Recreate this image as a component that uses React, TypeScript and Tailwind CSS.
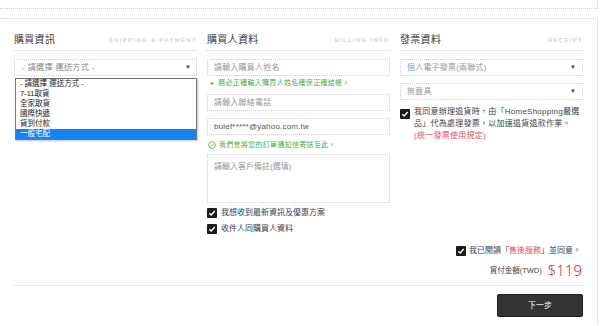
import React from 'react';

const font = { fontFamily: '"Liberation Sans", "Noto Sans CJK TC", sans-serif' };

const Check = () => (
	<span className="flex h-[10px] w-[10px] shrink-0 items-center justify-center rounded-[1px] bg-[#1a1a1a]">
		<svg viewBox="0 0 10 10" className="h-[8px] w-[8px]">
			<path d="M1.6 5.2 L4 7.4 L8.4 2.6" fill="none" stroke="#fff" strokeWidth="1.8" />
		</svg>
	</span>
);

const Arrow = () => <span className="text-[6px] text-[#444]">▼</span>;

const Header = ({ zh, en }: { zh: string; en: string }) => (
	<div className="flex h-[32px] items-end justify-between border-b border-dotted border-[#cfcfcf] pb-[4px]">
		<span className="text-[10px] leading-[12px] tracking-[0.3px] text-[#3a3a3a]">{zh}</span>
		<span className="text-[6px] font-bold leading-[12px] tracking-[1.3px] text-[#d4d4d4]">{en}</span>
	</div>
);

const Field = ({ text, dark, arrow }: { text: string; dark?: boolean; arrow?: boolean }) => (
	<div className="flex h-[17px] items-center justify-between border border-dotted border-[#cfcfcf] px-[6px]">
		<span className={`text-[8px] tracking-[0.2px] ${dark ? 'text-[#555]' : 'text-[#999]'}`}>{text}</span>
		{arrow && <Arrow />}
	</div>
);

const shipping = ['- 請選擇 運送方式 -', '7-11取貨', '全家取貨', '國際快遞', '貨到付款', '一般宅配'];

export default function App() {
	return (
		<div className="h-[326px] w-[600px] overflow-hidden bg-white" style={font}>
			<div className="h-[9px] w-[598px] border-r border-b border-dotted border-[#d0d0d0]" />
			<div className="mt-[9px] w-[598px] border-t border-r border-dotted border-[#d0d0d0] px-[14px] pb-[20px]">
				<div className="flex gap-[10px]">
					{/* 購買資訊 */}
					<div className="w-[183px]">
						<Header zh="購買資訊" en="SHIPPING & PAYMENT" />
						<div className="relative mt-[8px]">
							<div className="flex h-[17px] items-center justify-between border border-dotted border-[#cfcfcf] pr-[5px] pl-[7px]">
								<span className="text-[8px] tracking-[0.4px] text-[#888]">- 請選擇 運送方式 -</span>
								<Arrow />
							</div>
							<div className="absolute top-[19px] left-[1px] z-10 w-[182px] border border-[#777] bg-white shadow-[1px_1px_2px_rgba(0,0,0,0.25)]">
								{shipping.map((s, i) => (
									<div
										key={s}
										className={`h-[10px] px-[4px] text-[7.5px] leading-[10px] ${
											i === shipping.length - 1 ? 'bg-[#1684f0] text-white' : 'text-[#222]'
										}`}
									>
										{s}
									</div>
								))}
							</div>
						</div>
					</div>

					{/* 購買人資料 */}
					<div className="w-[183px]">
						<Header zh="購買人資料" en="BILLING INFO" />
						<div className="mt-[8px]">
							<Field text="請輸入購買人姓名" />
						</div>
						<div className="mt-[2px] flex items-center gap-[3px] pl-[3px] text-[7px] leading-[10px] tracking-[0.3px] text-[#3fae49]">
							<span className="text-[5px]">►</span>
							務必正確輸入購買人姓名確保正確結帳。
						</div>
						<div className="mt-[6px]">
							<Field text="請輸入聯絡電話" />
						</div>
						<div className="mt-[7px]">
							<Field text="bulef*****@yahoo.com.tw" dark />
						</div>
						<div className="mt-[5px] flex items-center gap-[3px] pl-[1px] text-[7px] leading-[10px] tracking-[0.3px] text-[#3fae49]">
							<svg viewBox="0 0 10 10" className="h-[8px] w-[8px]">
								<circle cx="5" cy="5" r="4.2" fill="none" stroke="#3fae49" strokeWidth="1" />
								<path d="M2.9 5.1 L4.4 6.5 L7.2 3.6" fill="none" stroke="#3fae49" strokeWidth="1" />
							</svg>
							我們會將您的訂單通知信寄送至此。
						</div>
						<div className="mt-[4px] h-[49px] border border-dotted border-[#cfcfcf] px-[6px] pt-[7px] text-[8px] leading-[10px] text-[#999]">
							請輸入客戶備註(選填)
						</div>
						<div className="mt-[5px] flex h-[10px] items-center gap-[4px] text-[8px] text-[#444]">
							<Check />
							我想收到最新資訊及優惠方案
						</div>
						<div className="mt-[6px] flex h-[10px] items-center gap-[4px] text-[8px] text-[#444]">
							<Check />
							收件人同購買人資料
						</div>
					</div>

					{/* 發票資料 */}
					<div className="w-[183px]">
						<Header zh="發票資料" en="RECEIPT" />
						<div className="mt-[8px]">
							<Field text="個人電子發票(兩聯式)" arrow />
						</div>
						<div className="mt-[7px]">
							<Field text="無載具" arrow />
						</div>
						<div className="mt-[6px] flex gap-[4px]">
							<span className="mt-[3px]">
								<Check />
							</span>
							<p className="text-[8px] leading-[12px] tracking-[0.25px] whitespace-nowrap text-[#444]">
								我同意辦理退貨時，由「HomeShopping嚴選
								<br />
								品」代為處理發票，以加速退貨退款作業。
								<br />
								<span className="text-[#e2506b]">(統一發票使用規定)</span>
							</p>
						</div>
					</div>
				</div>

				<div className="mt-[12px] flex h-[10px] items-center justify-end gap-[3px] pr-[2px] text-[8px] text-[#444]">
					<Check />
					<span>
						我已閱讀「<span className="text-[#e2506b]">售後服務</span>」並同意。
					</span>
				</div>
				<div className="mt-[6px] flex h-[17px] items-center justify-end gap-[6px] pr-[1px]">
					<span className="text-[7.5px] text-[#444]">實付金額(TWD)</span>
					<span
						className="text-[15px] leading-[17px] font-light text-[#d0021b]"
						style={{ fontFamily: '"Open Sans", sans-serif' }}
					>
						$119
					</span>
				</div>
				<div className="mt-[6px] border-t border-dotted border-[#cfcfcf]" />
				<div className="mt-[8px] flex justify-end">
					<button className="h-[23px] w-[86px] rounded-[2px] border border-[#1f1f1f] bg-[#333] text-[8px] text-white">
						下一步
					</button>
				</div>
			</div>
		</div>
	);
}
